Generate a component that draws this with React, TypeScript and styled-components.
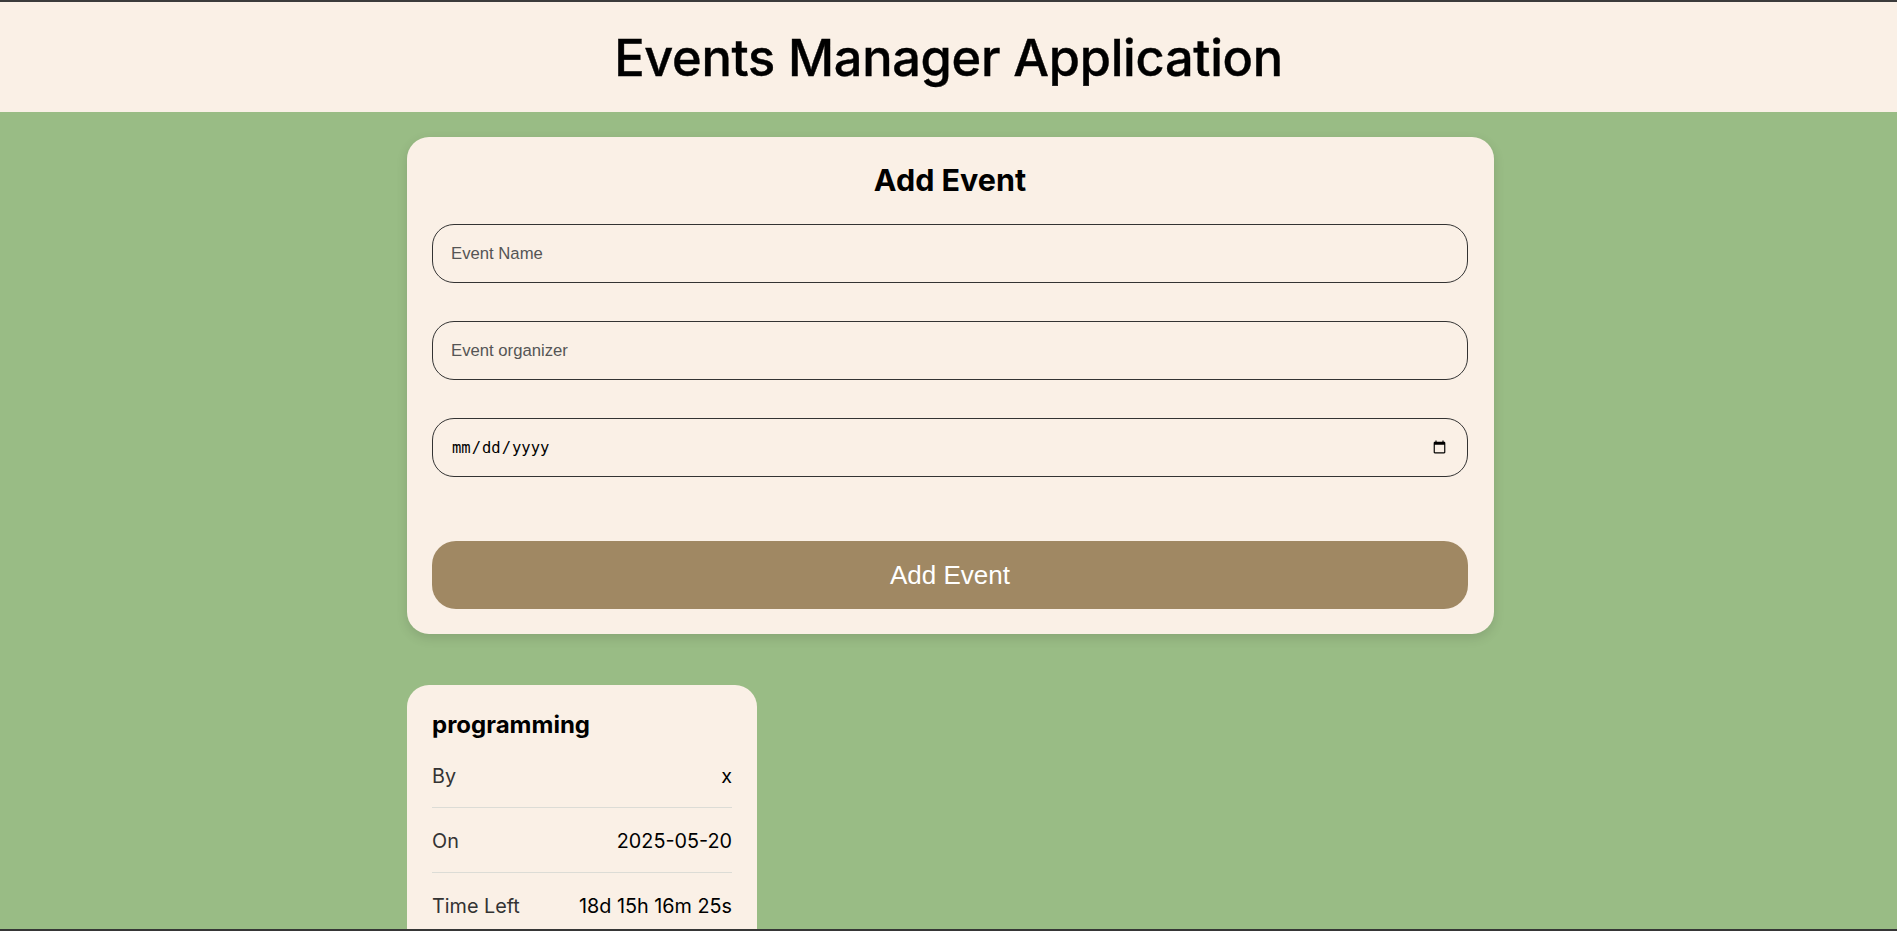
import React from "react";
import styled, { createGlobalStyle } from "styled-components";

const GlobalStyle = createGlobalStyle`
  html, body {
    margin: 0;
    padding: 0;
  }
  body {
    background: #99bc85;
    font-family: "Liberation Sans", Arial, sans-serif;
  }
  * { box-sizing: border-box; }
`;

const Page = styled.div`
  height: 100vh;
  overflow: hidden;
  border-top: 2px solid #3b3b3b;
  border-bottom: 2px solid #363636;
  display: flex;
  flex-direction: column;
`;

const Header = styled.header`
  flex: none;
  height: 110px;
  background: #faf0e6;
  display: flex;
  align-items: center;
  justify-content: center;
`;

const Title = styled.h1`
  margin: 0;
  font-family: Inter, "Noto Sans", sans-serif;
  font-weight: 500;
  font-size: 50.5px;
  letter-spacing: -0.3px;
  color: #000;
  -webkit-text-stroke: 0.4px #000;
`;

const Main = styled.main`
  flex: 1;
  min-height: 0;
  width: 1087px;
  margin: 25px 0 0 407px;
  display: flex;
  flex-direction: column;
  align-items: flex-start;
  gap: 51px;
`;

const FormCard = styled.form`
  flex: none;
  width: 1087px;
  background: #faf0e6;
  border-radius: 22px;
  padding: 25px 26px 25px 25px;
  box-shadow: 0 4px 12px rgba(0, 0, 0, 0.12);
  display: flex;
  flex-direction: column;
`;

const FormTitle = styled.h2`
  margin: 0 0 26px;
  text-align: center;
  font-family: Inter, "Noto Sans", sans-serif;
  font-weight: 700;
  font-size: 30.5px;
  line-height: 36px;
  color: #000;
`;

const Fields = styled.div`
  display: flex;
  flex-direction: column;
  gap: 38px;
`;

const Input = styled.input<{ $mono?: boolean }>`
  width: 100%;
  height: 59px;
  border: 1px solid #333;
  border-radius: 22px;
  background: transparent;
  padding: 0 18px;
  font-family: ${(p) => (p.$mono ? '"DejaVu Sans Mono", monospace' : '"Liberation Sans", Arial, sans-serif')};
  font-size: ${(p) => (p.$mono ? "15.5px" : "16.7px")};
  color: #000;
  outline: none;
  &::placeholder {
    color: #555;
  }
`;

const SubmitButton = styled.button`
  margin-top: 64px;
  width: 100%;
  height: 68px;
  border: none;
  border-radius: 24px;
  background: #a08863;
  color: #fff;
  font-family: "Liberation Sans", Arial, sans-serif;
  font-size: 26px;
  cursor: pointer;
`;

const EventCard = styled.div`
  flex: none;
  width: 350px;
  background: #faf0e6;
  border-radius: 22px;
  padding: 25px 25px 20px;
`;

const EventName = styled.h3`
  margin: 0 0 3px;
  font-family: Inter, "Noto Sans", sans-serif;
  font-weight: 700;
  font-size: 24px;
  line-height: 30px;
  color: #000;
`;

const Row = styled.div<{ $divider?: boolean }>`
  display: flex;
  justify-content: space-between;
  align-items: baseline;
  padding: 21px 0 19px;
  line-height: 24px;
  font-family: Inter, "Noto Sans", sans-serif;
  font-size: 19.8px;
  border-bottom: ${(p) => (p.$divider ? "1px solid #dcdcd6" : "none")};
`;

const Label = styled.span`
  color: #333;
`;

const Value = styled.span`
  color: #000;
`;

export default function App() {
  return (
    <>
      <GlobalStyle />
      <Page>
        <Header>
          <Title>Events Manager Application</Title>
        </Header>
        <Main>
          <FormCard onSubmit={(e) => e.preventDefault()}>
            <FormTitle>Add Event</FormTitle>
            <Fields>
              <Input type="text" placeholder="Event Name" />
              <Input type="text" placeholder="Event organizer" />
              <Input type="date" $mono />
            </Fields>
            <SubmitButton type="submit">Add Event</SubmitButton>
          </FormCard>
          <EventCard>
            <EventName>programming</EventName>
            <Row $divider>
              <Label>By</Label>
              <Value>x</Value>
            </Row>
            <Row $divider>
              <Label>On</Label>
              <Value>2025-05-20</Value>
            </Row>
            <Row>
              <Label>Time Left</Label>
              <Value>18d 15h 16m 25s</Value>
            </Row>
          </EventCard>
        </Main>
      </Page>
    </>
  );
}
